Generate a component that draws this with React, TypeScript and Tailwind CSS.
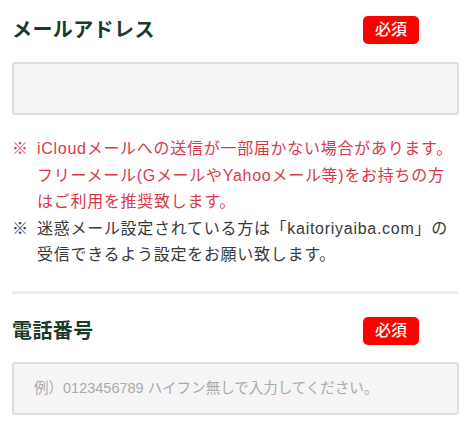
import React from "react";

const font = { fontFamily: '"Liberation Sans", "Noto Sans CJK JP", sans-serif' };

const Label: React.FC<{ title: string }> = ({ title }) => (
  <div className="flex items-center justify-between pr-10">
    <h2 className="text-[20px] font-bold leading-[28px] tracking-[0.02em] text-[#1b3a28]">{title}</h2>
    <span className="flex h-[28px] w-[56px] items-center justify-center rounded-[5px] bg-[#ff0000] text-[16px] font-medium text-white">
      必須
    </span>
  </div>
);

export default function App() {
  return (
    <div className="w-[471px] bg-white px-3 pt-4" style={font}>
      <Label title="メールアドレス" />
      <input
        type="email"
        className="mt-[18px] block h-[53px] w-full rounded-[3px] border-2 border-[#dedede] bg-[#f5f5f5] px-5 outline-none"
      />
      <ul className="mt-[21px] text-[16px] leading-[26.5px] tracking-[0.045em]">
        <li className="flex text-[#d83a4a]">
          <span className="w-[25px] shrink-0">※</span>
          <span>
            iCloudメールへの送信が一部届かない場合があります。
            <br />
            フリーメール(GメールやYahooメール等)をお持ちの方
            <br />
            はご利用を推奨致します。
          </span>
        </li>
        <li className="flex text-[#3a3a3a]">
          <span className="w-[25px] shrink-0">※</span>
          <span>
            迷惑メール設定されている方は「kaitoriyaiba.com」の
            <br />
            受信できるよう設定をお願い致します。
          </span>
        </li>
      </ul>
      <hr className="mt-[22px] border-t-[3px] border-[#ededed]" />
      <div className="mt-[23px]">
        <Label title="電話番号" />
      </div>
      <input
        type="tel"
        placeholder="例）0123456789 ハイフン無しで入力してください。"
        className="mt-[17px] block h-[53px] w-full rounded-[3px] border-2 border-[#dedede] bg-[#f5f5f5] px-5 text-[14.5px] outline-none placeholder:text-[#aaaaaa]"
      />
    </div>
  );
}
